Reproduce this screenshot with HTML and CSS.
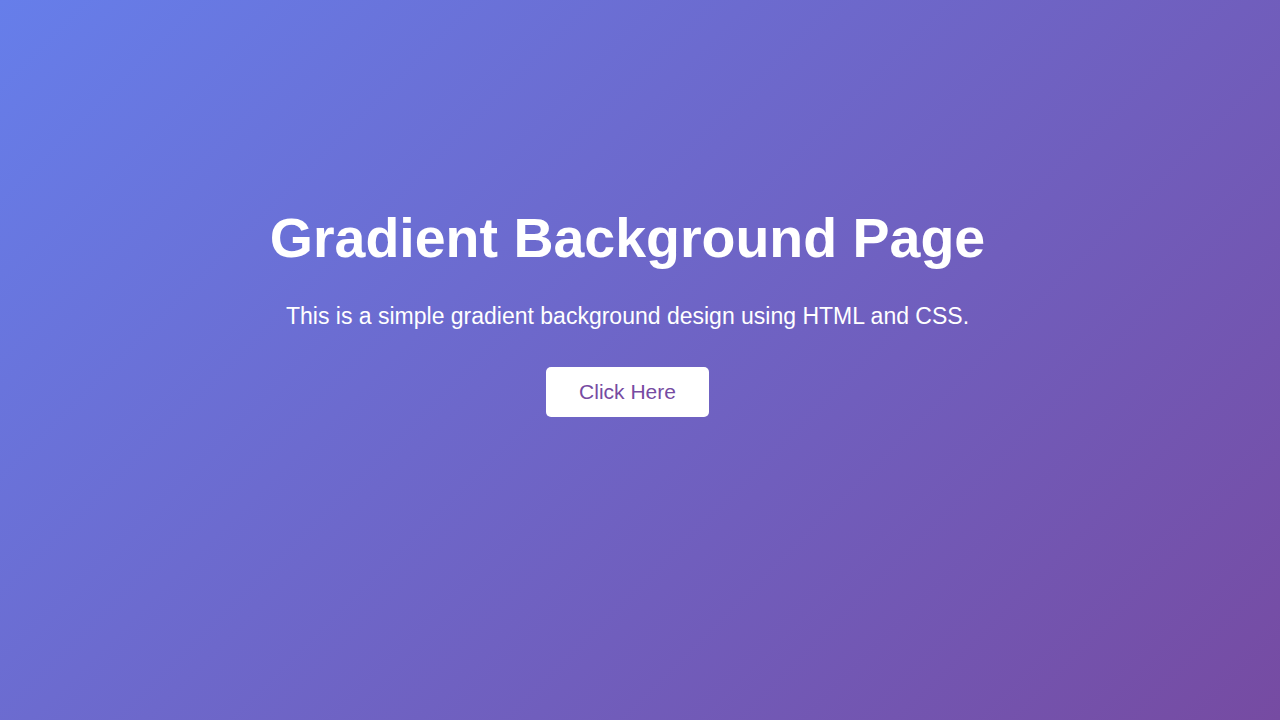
FILE: index.html
```html
<!DOCTYPE html>
<html lang="en">
<head>
  <meta charset="UTF-8"/>
  <meta name="viewport" content="width=device-width, initial-scale=1.0"/>
  <title>Gradient Background</title>
  <link rel="stylesheet" href="styles.css">
</head>
<body>
  <div class="container">
    <h1>Gradient Background Page</h1>
    <p>This is a simple gradient background design using HTML and CSS.</p>
    <button class="btn">Click Here</button>
  </div>
</body>
</html>
```

FILE: styles.css
```css
body {
  margin: 0;
  padding: 0 25px 97px 0;
  height: 100vh;
  box-sizing: border-box;
  font-family: "Liberation Sans", Arial, sans-serif;
  background: linear-gradient(135deg, #667eea, #764ba2);
  color: white;
  display: flex;
  justify-content: center;
  align-items: center;
}

.container {
  text-align: center;
}

h1 {
  font-size: 55.5px;
  margin: 0 0 33px;
}

p {
  font-size: 23px;
  margin: 0 0 37px;
}

.btn {
  background: white;
  color: #764ba2;
  border: none;
  padding: 13px 33px;
  font-size: 21px;
  font-family: inherit;
  border-radius: 5px;
  cursor: pointer;
}
```
